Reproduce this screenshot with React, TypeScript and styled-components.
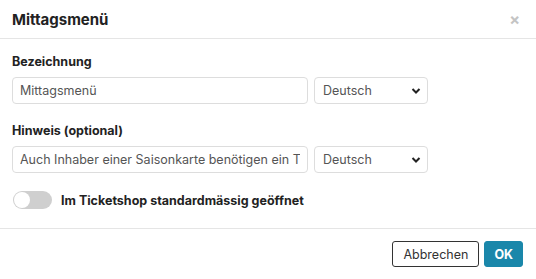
import React, { useState } from "react";
import styled, { createGlobalStyle } from "styled-components";

const GlobalStyle = createGlobalStyle`
  html, body {
    margin: 0;
    padding: 0;
    background: #fff;
    font-family: Inter, "Noto Sans", sans-serif;
    color: #222;
  }
  * { box-sizing: border-box; }
`;

const Modal = styled.div`
  width: 536px;
  height: 279px;
  display: flex;
  flex-direction: column;
  background: #fff;
`;

const Header = styled.div`
  height: 39px;
  padding: 0 12px;
  display: flex;
  align-items: center;
  justify-content: space-between;
  border-bottom: 1px solid #e5e5e5;
`;

const Title = styled.h3`
  margin: 0;
  font-size: 15px;
  font-weight: 700;
  color: #222;
`;

const Close = styled.button`
  border: none;
  background: none;
  padding: 0;
  margin-right: 4px;
  font-family: Inter, sans-serif;
  font-size: 16px;
  font-weight: 700;
  line-height: 1;
  color: #c4c4c4;
  cursor: pointer;
`;

const Body = styled.div`
  flex: 1;
  padding: 15px 12px 0;
  border-bottom: 1px solid #e5e5e5;
`;

const Label = styled.div<{ $top?: number }>`
  font-size: 12.5px;
  font-weight: 700;
  line-height: 16px;
  color: #222;
  margin-top: ${(p) => p.$top ?? 0}px;
  margin-bottom: 7px;
`;

const Row = styled.div`
  display: flex;
  gap: 6px;
`;

const TextInput = styled.input`
  width: 296px;
  height: 27px;
  padding: 0 7px;
  border: 1px solid #ddd;
  border-radius: 4px;
  font-family: Inter, sans-serif;
  font-size: 12.5px;
  color: #555;
  outline: none;
`;

const SelectWrap = styled.div`
  position: relative;
  width: 114px;
  height: 27px;
`;

const Select = styled.select`
  appearance: none;
  width: 100%;
  height: 100%;
  padding: 0 8px;
  border: 1px solid #ddd;
  border-radius: 4px;
  background: #fff;
  font-family: Inter, sans-serif;
  font-size: 12.5px;
  color: #555;
  outline: none;
`;

const Chevron = styled.svg`
  position: absolute;
  right: 7px;
  top: 10px;
  pointer-events: none;
`;

const ToggleRow = styled.div`
  display: flex;
  align-items: center;
  gap: 9px;
  margin-top: 18px;
  padding-left: 1px;
`;

const Track = styled.button<{ $on: boolean }>`
  position: relative;
  width: 39px;
  height: 18px;
  border: none;
  padding: 0;
  border-radius: 9px;
  background: ${(p) => (p.$on ? "#1a87aa" : "#cfcfcf")};
  cursor: pointer;
`;

const Knob = styled.span<{ $on: boolean }>`
  position: absolute;
  top: 1px;
  left: ${(p) => (p.$on ? "22px" : "1px")};
  width: 16px;
  height: 16px;
  border-radius: 50%;
  background: #fff;
`;

const ToggleLabel = styled.span`
  font-size: 12.5px;
  font-weight: 700;
  color: #222;
`;

const Footer = styled.div`
  height: 50px;
  padding: 0 13px;
  display: flex;
  align-items: center;
  justify-content: flex-end;
  gap: 5px;
`;

const Button = styled.button<{ $primary?: boolean }>`
  height: 26px;
  padding: 0 ${(p) => (p.$primary ? 9 : 10)}px;
  border-radius: 3px;
  font-family: Inter, sans-serif;
  font-size: 12.5px;
  font-weight: ${(p) => (p.$primary ? 700 : 400)};
  color: ${(p) => (p.$primary ? "#fff" : "#333")};
  background: ${(p) => (p.$primary ? "#1a87aa" : "#fff")};
  border: 1px solid ${(p) => (p.$primary ? "#1a87aa" : "#333")};
  cursor: pointer;
`;

const LangSelect: React.FC = () => (
  <SelectWrap>
    <Select defaultValue="de">
      <option value="de">Deutsch</option>
      <option value="fr">Französisch</option>
      <option value="en">Englisch</option>
    </Select>
    <Chevron width="10" height="8" viewBox="0 0 10 8">
      <path d="M1.5 2l3.5 3.5L8.5 2" fill="none" stroke="#222" strokeWidth="2" />
    </Chevron>
  </SelectWrap>
);

const App: React.FC = () => {
  const [open, setOpen] = useState(false);

  return (
    <Modal>
      <GlobalStyle />
      <Header>
        <Title>Mittagsmenü</Title>
        <Close>×</Close>
      </Header>
      <Body>
        <Label>Bezeichnung</Label>
        <Row>
          <TextInput defaultValue="Mittagsmenü" />
          <LangSelect />
        </Row>
        <Label $top={19}>Hinweis (optional)</Label>
        <Row>
          <TextInput defaultValue="Auch Inhaber einer Saisonkarte benötigen ein Ticket" />
          <LangSelect />
        </Row>
        <ToggleRow>
          <Track $on={open} onClick={() => setOpen(!open)}>
            <Knob $on={open} />
          </Track>
          <ToggleLabel>Im Ticketshop standardmässig geöffnet</ToggleLabel>
        </ToggleRow>
      </Body>
      <Footer>
        <Button>Abbrechen</Button>
        <Button $primary>OK</Button>
      </Footer>
    </Modal>
  );
};

export default App;
